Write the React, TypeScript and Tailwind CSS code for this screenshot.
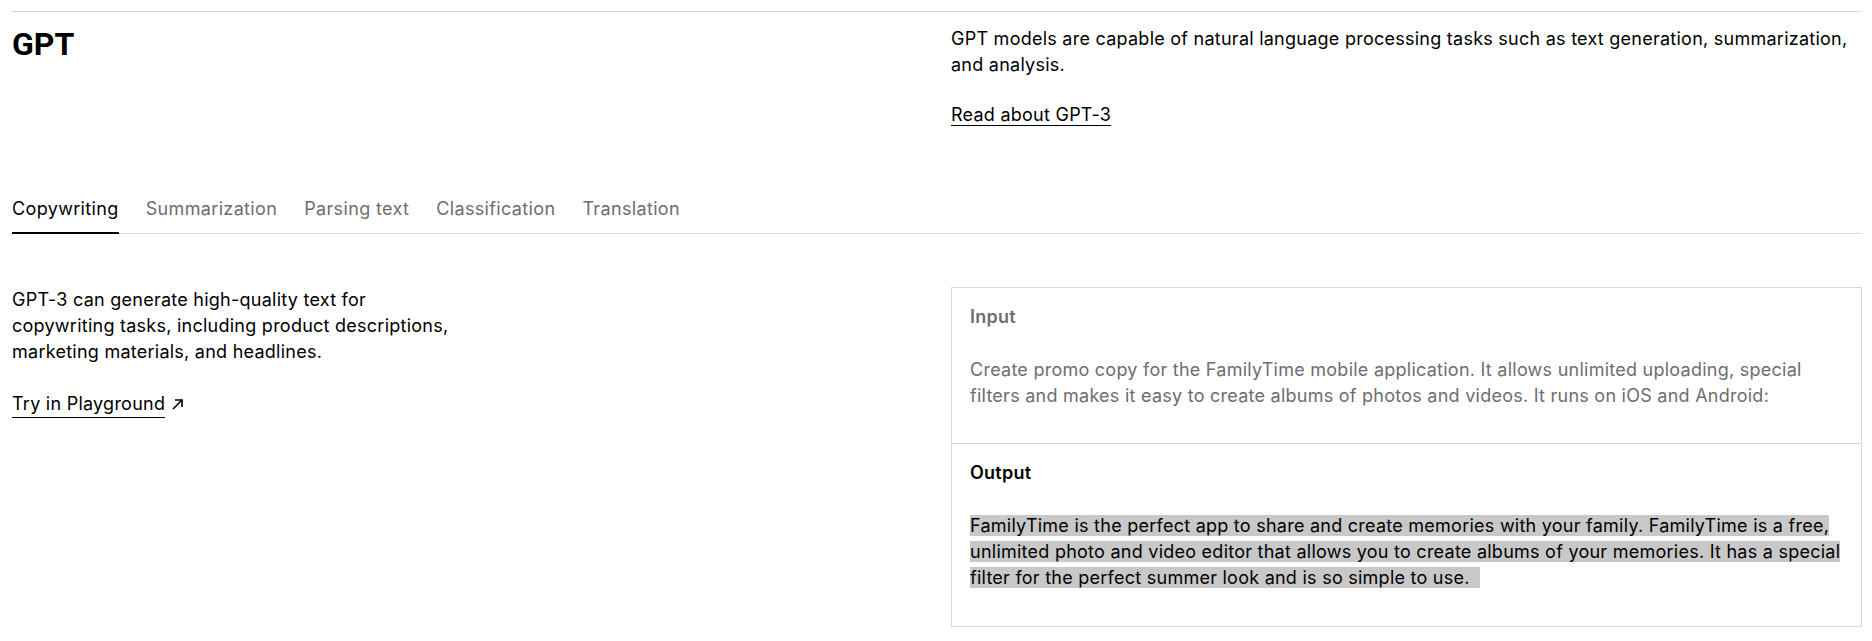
import { useState } from 'react'

const tabs = ['Copywriting', 'Summarization', 'Parsing text', 'Classification', 'Translation']

export default function App() {
  const [active, setActive] = useState('Copywriting')

  return (
    <div className="min-h-screen bg-white pl-3 pr-[10px] font-['Inter',sans-serif] text-[18px] leading-[26px] tracking-[0.25px] text-black">
      {/* Header: title + intro */}
      <div className="mt-[11px] flex border-t border-[#d9d9d9]">
        <div className="w-[939px] pt-3">
          <h1 className="font-['Roboto',sans-serif] text-[32px] font-bold leading-[40px] tracking-normal">GPT</h1>
        </div>
        <div className="flex-1 pt-[14px]">
          <p>
            GPT models are capable of natural language processing tasks such as text generation, summarization,
            and analysis.
          </p>
          <p className="mt-6">
            <a href="#" className="border-b border-black">
              Read about GPT-3
            </a>
          </p>
        </div>
      </div>

      {/* Tabs */}
      <div className="mt-[68px] flex gap-[27px] border-b border-[#d9d9d9] tracking-[0.35px]">
        {tabs.map((tab) => (
          <button
            key={tab}
            onClick={() => setActive(tab)}
            className={
              tab === active
                ? '-mb-px border-b-2 border-black pb-[10px] text-black'
                : 'pb-[11px] text-[#6e6e6e]'
            }
          >
            {tab}
          </button>
        ))}
      </div>

      {/* Example */}
      <div className="mt-[53px] flex items-start">
        <div className="w-[939px]">
          <p className="max-w-[440px]">
            GPT-3 can generate high-quality text for copywriting tasks, including product descriptions, marketing
            materials, and headlines.
          </p>
          <p className="mt-[26px] flex items-center gap-[6px]">
            <a href="#" className="border-b border-black">
              Try in Playground
            </a>
            <svg width="13" height="13" viewBox="0 0 13 13" fill="none" stroke="currentColor" strokeWidth="1.6">
              <path d="M2 11L11 2" />
              <path d="M4 2H11V9" />
            </svg>
          </p>
        </div>

        <div className="flex-1 border border-[#d9d9d9]">
          <div className="px-[18px] pt-4 pb-[34px]">
            <div className="font-semibold text-[#6e6e6e]">Input</div>
            <p className="mt-[27px] text-[#6e6e6e]">
              Create promo copy for the FamilyTime mobile application. It allows unlimited uploading, special
              filters and makes it easy to create albums of photos and videos. It runs on iOS and Android:
            </p>
          </div>
          <div className="border-t border-[#d9d9d9] px-[18px] pt-4 pb-[35px]">
            <div className="font-semibold">Output</div>
            <p className="mt-[27px]">
              <span className="bg-[#c8c8c8] [box-decoration-break:clone]">
                FamilyTime is the perfect app to share and create memories with your family. FamilyTime is a free,
                unlimited photo and video editor that allows you to create albums of your memories. It has a special
                filter for the perfect summer look and is so simple to use.&nbsp;&nbsp;
              </span>
            </p>
          </div>
        </div>
      </div>
    </div>
  )
}
